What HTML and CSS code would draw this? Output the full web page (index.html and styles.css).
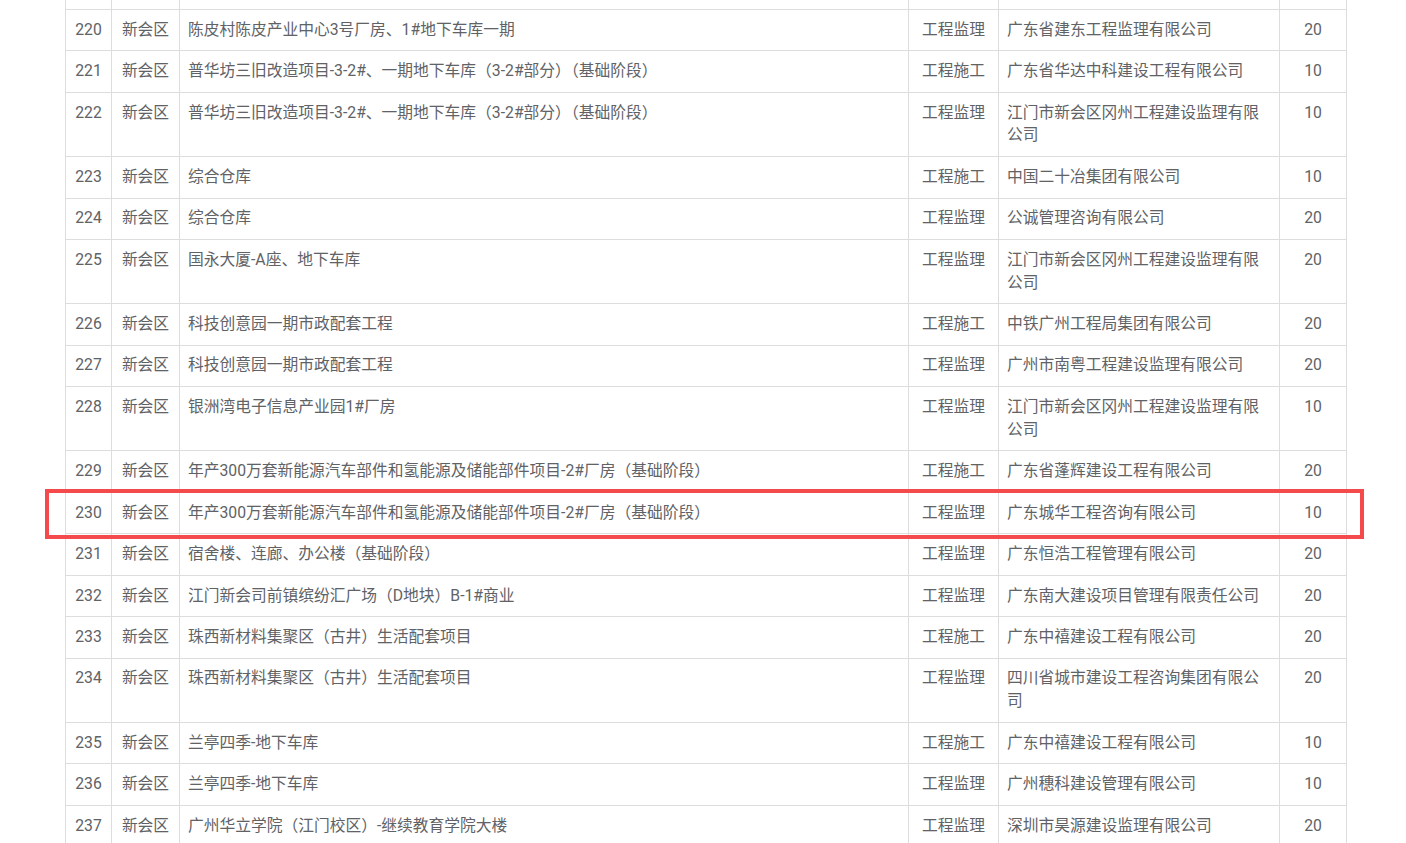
FILE: index.html
```html
<!DOCTYPE html>
<html lang="zh-CN">
<head>
<meta charset="utf-8">
<title>名单</title>
<link rel="stylesheet" href="styles.css">
</head>
<body>
<div class="sheet">
<table class="list">
<colgroup>
<col class="c-no"><col class="c-area"><col class="c-name"><col class="c-type"><col class="c-co"><col class="c-score">
</colgroup>
<tbody>
<tr class="prev"><td class="num">&nbsp;</td><td class="ctr">&nbsp;</td><td>&nbsp;</td><td class="ctr">&nbsp;</td><td>&nbsp;</td><td class="num">&nbsp;</td></tr>
<tr><td class="num">220</td><td class="ctr">新会区</td><td>陈皮村陈皮产业中心3号厂房、1#地下车库一期</td><td class="ctr">工程监理</td><td>广东省建东工程监理有限公司</td><td class="num">20</td></tr>
<tr><td class="num">221</td><td class="ctr">新会区</td><td>普华坊三旧改造项目-3-2#、一期地下车库（3-2#部分）（基础阶段）</td><td class="ctr">工程施工</td><td>广东省华达中科建设工程有限公司</td><td class="num">10</td></tr>
<tr><td class="num">222</td><td class="ctr">新会区</td><td>普华坊三旧改造项目-3-2#、一期地下车库（3-2#部分）（基础阶段）</td><td class="ctr">工程监理</td><td>江门市新会区冈州工程建设监理有限公司</td><td class="num">10</td></tr>
<tr><td class="num">223</td><td class="ctr">新会区</td><td>综合仓库</td><td class="ctr">工程施工</td><td>中国二十冶集团有限公司</td><td class="num">10</td></tr>
<tr><td class="num">224</td><td class="ctr">新会区</td><td>综合仓库</td><td class="ctr">工程监理</td><td>公诚管理咨询有限公司</td><td class="num">20</td></tr>
<tr><td class="num">225</td><td class="ctr">新会区</td><td>国永大厦-A座、地下车库</td><td class="ctr">工程监理</td><td>江门市新会区冈州工程建设监理有限公司</td><td class="num">20</td></tr>
<tr><td class="num">226</td><td class="ctr">新会区</td><td>科技创意园一期市政配套工程</td><td class="ctr">工程施工</td><td>中铁广州工程局集团有限公司</td><td class="num">20</td></tr>
<tr><td class="num">227</td><td class="ctr">新会区</td><td>科技创意园一期市政配套工程</td><td class="ctr">工程监理</td><td>广州市南粤工程建设监理有限公司</td><td class="num">20</td></tr>
<tr><td class="num">228</td><td class="ctr">新会区</td><td>银洲湾电子信息产业园1#厂房</td><td class="ctr">工程监理</td><td>江门市新会区冈州工程建设监理有限公司</td><td class="num">10</td></tr>
<tr><td class="num">229</td><td class="ctr">新会区</td><td>年产300万套新能源汽车部件和氢能源及储能部件项目-2#厂房（基础阶段）</td><td class="ctr">工程施工</td><td>广东省蓬辉建设工程有限公司</td><td class="num">20</td></tr>
<tr class="marked"><td class="num anchor">230<div class="highlight"></div></td><td class="ctr">新会区</td><td>年产300万套新能源汽车部件和氢能源及储能部件项目-2#厂房（基础阶段）</td><td class="ctr">工程监理</td><td>广东城华工程咨询有限公司</td><td class="num">10</td></tr>
<tr><td class="num">231</td><td class="ctr">新会区</td><td>宿舍楼、连廊、办公楼（基础阶段）</td><td class="ctr">工程监理</td><td>广东恒浩工程管理有限公司</td><td class="num">20</td></tr>
<tr><td class="num">232</td><td class="ctr">新会区</td><td>江门新会司前镇缤纷汇广场（D地块）B-1#商业</td><td class="ctr">工程监理</td><td>广东南大建设项目管理有限责任公司</td><td class="num">20</td></tr>
<tr><td class="num">233</td><td class="ctr">新会区</td><td>珠西新材料集聚区（古井）生活配套项目</td><td class="ctr">工程施工</td><td>广东中禧建设工程有限公司</td><td class="num">20</td></tr>
<tr><td class="num">234</td><td class="ctr">新会区</td><td>珠西新材料集聚区（古井）生活配套项目</td><td class="ctr">工程监理</td><td>四川省城市建设工程咨询集团有限公司</td><td class="num">20</td></tr>
<tr><td class="num">235</td><td class="ctr">新会区</td><td>兰亭四季-地下车库</td><td class="ctr">工程施工</td><td>广东中禧建设工程有限公司</td><td class="num">10</td></tr>
<tr><td class="num">236</td><td class="ctr">新会区</td><td>兰亭四季-地下车库</td><td class="ctr">工程监理</td><td>广州穗科建设管理有限公司</td><td class="num">10</td></tr>
<tr><td class="num">237</td><td class="ctr">新会区</td><td>广州华立学院（江门校区）-继续教育学院大楼</td><td class="ctr">工程监理</td><td>深圳市昊源建设监理有限公司</td><td class="num">20</td></tr>
</tbody>
</table>
</div>
</body>
</html>
```

FILE: styles.css
```css
html, body {
  margin: 0;
  padding: 0;
  background: #ffffff;
  overflow: hidden;
}

body {
  font-family: "Roboto", "Noto Sans CJK SC", sans-serif;
  font-size: 15.75px;
  color: #606266;
}

.sheet {
  margin-top: -32.5px;
  padding-left: 65px;
}

.list {
  width: 1281px;
  table-layout: fixed;
  border-collapse: collapse;
}

.c-no { width: 46px; }
.c-area { width: 68px; }
.c-name { width: 729px; }
.c-type { width: 90px; }
.c-co { width: 281px; }
.c-score { width: 67px; }

.list td {
  border: 1px solid #dddddd;
  padding: 8.8px 10px 8.8px 8px;
  line-height: 22.85px;
  vertical-align: top;
  text-align: left;
  word-break: break-all;
}

.list td.num,
.list td.ctr {
  text-align: center;
  padding-left: 4px;
  padding-right: 4px;
}

.anchor {
  position: relative;
}

.highlight {
  position: absolute;
  left: -21px;
  top: -4px;
  width: 1319px;
  height: 50px;
  box-sizing: border-box;
  border: 4px solid #f44a4c;
  pointer-events: none;
}
```
